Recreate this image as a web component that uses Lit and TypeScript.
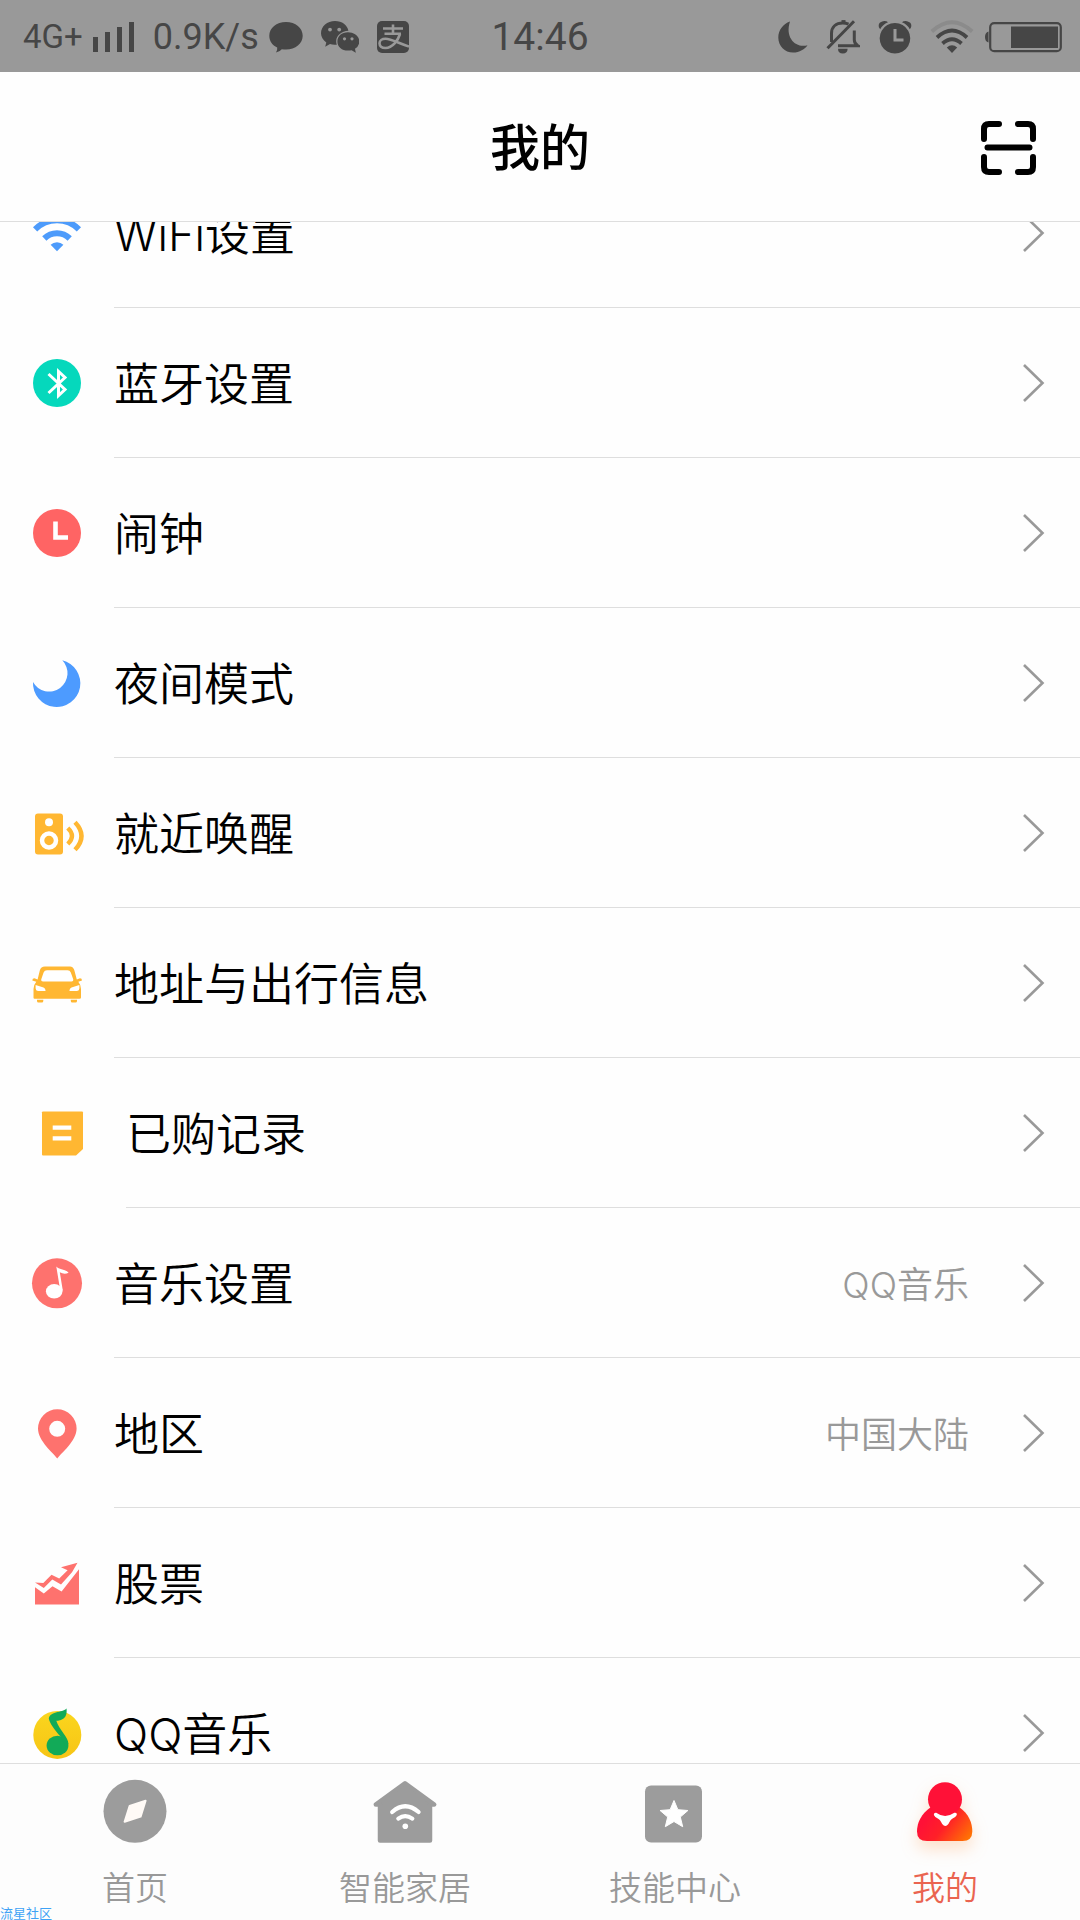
import { LitElement, html, svg, css, nothing, type SVGTemplateResult } from "lit";
import { customElement, property, state } from "lit/decorators.js";
import { classMap } from "lit/directives/class-map.js";

const icons: Record<string, SVGTemplateResult> = {
  wifi: svg`
    <g fill="none" stroke="#4d9bfb" stroke-width="6">
      <path d="M2.1 20.3A31 31 0 0 1 45.9 20.3"/>
      <path d="M11.3 29.5A18 18 0 0 1 36.7 29.5"/>
    </g>
    <path fill="#4d9bfb" d="M24 42.2L17.6 35.8A9 9 0 0 1 30.4 35.8Z"/>`,
  bluetooth: svg`
    <circle cx="24" cy="24" r="24" fill="#05d8bc"/>
    <path d="M15.5 15L32 30.500L25.500 36.500V12.500L32 18.500L15.500 34" fill="none" stroke="#fff" stroke-width="3"/>`,
  clock: svg`
    <circle cx="24" cy="24" r="24" fill="#ff6464"/>
    <path d="M22.500 12.500V28.500H35" fill="none" stroke="#fff" stroke-width="4.600"/>`,
  moon: svg`<path fill="#4d9bff" d="M29.3 1.300A23.700 23.700 0 1 1 0 23A18.400 18.400 0 1 0 29.300 1.300Z"/>`,
  speaker: svg`
    <rect x="2" y="4.500" width="28" height="41" rx="3" fill="#ffb732"/>
    <circle cx="16" cy="13.300" r="4" fill="#fff"/>
    <circle cx="16" cy="31.500" r="7" fill="#ffb732" stroke="#fff" stroke-width="4.500"/>
    <g fill="none" stroke="#ffb732" stroke-width="4.400">
      <path d="M34.800 19Q43.200 27 34.800 35"/>
      <path d="M42 13.200Q55 27 42 40.800"/>
    </g>`,
  car: svg`
    <path fill="#ffb732" d="M12 7.500H36C39.500 7.500 40.600 9 41.400 11.500L43.800 20.500L47 19.300Q49 19.300 49 21.500L45.300 22.800Q48 26 48 30V38.500Q48 39.700 46.500 39.700H1.500Q.5 39.700 .5 38.500V30Q.5 26 3.300 22.800L-.7 21.500Q-.7 19.300 1.500 19.300L4.600 20.500L6.800 11.500Q7.800 7.500 12 7.500ZM4 40.700H10.300V42Q10.300 43.500 8.800 43.500H5.500Q4 43.500 4 42ZM37.800 40.700H44V42Q44 43.500 42.500 43.500H39.300Q37.800 43.500 37.800 42Z"/>
    <path fill="#fff" d="M14 11.200H34.500Q37 11.200 37.800 13.400L40.300 20.500Q40.600 22.500 38.600 22.500H10Q7.800 22.500 8.200 20.500L10.600 13.400Q11.400 11.200 14 11.200ZM2.600 26L10.500 28.600Q12.600 29.600 12.600 32H5Q2.600 31.700 2.600 29.300ZM46.400 26L38.500 28.600Q36.400 29.600 36.400 32H44Q46.400 31.700 46.400 29.300Z"/>`,
  record: svg`
    <path fill="#ffb732" d="M3 3.300Q3 2.500 4 2.500H43Q44 2.500 44 3.500V40L37 46.500H4Q3 46.500 3 45.500Z"/>
    <path fill="#fff" d="M13.700 16.500H32.300V20.800H13.700ZM13.700 27.300H32.300V31.600H13.700Z"/>`,
  music: svg`
    <circle cx="24" cy="24.300" r="25" fill="#fe726e"/>
    <ellipse cx="21.200" cy="32.300" rx="8.300" ry="7.200" fill="#fff"/>
    <path fill="#fff" d="M23.300 7.500C26 11.300 31.800 9.200 35.600 13.800C32.600 15.200 29.800 15 26.800 13.300L29.800 31.500L27.400 32.500Z"/>`,
  pin: svg`
    <path fill="#fe726e" fill-rule="evenodd" d="M24.300 49.500C20.500 44.500 5 32 5 19.600A19.300 19.300 0 0 1 43.600 19.600C43.600 32 28.100 44.500 24.300 49.500ZM24.200 11.800A8 8 0 1 0 24.200 27.800A8 8 0 1 0 24.200 11.800Z"/>`,
  stock: svg`
    <path fill="#fe726e" d="M2 28.300L10.800 34.600L19.500 27.300L28.600 32.500L46 10.300V45.500H2Z"/>
    <path fill="#fe726e" d="M2 23.600L10.300 24L18.500 15.800L26.200 19.500L34.600 11.300L28 8.200L44.500 3.800L39 13.200L28 25.600L19.300 20.600L10.800 29Z"/>`,
  qq: svg`
    <defs>
      <linearGradient id="gold" x1="0" y1="0" x2="0" y2="1">
        <stop offset="0" stop-color="#fad61e"/><stop offset="1" stop-color="#f7c415"/>
      </linearGradient>
    </defs>
    <circle cx="24.300" cy="25.900" r="24" fill="url(#gold)"/>
    <ellipse cx="24.500" cy="36.500" rx="10.900" ry="9.800" fill="#12aa58"/>
    <path fill="#12aa58" d="M33.500 -.8C32 3.500 17 1.500 15.800 9.500C16.500 14 21.500 21 28 28L32.500 38L35.400 35C35.600 28 26 21 23.300 11.800C28 11.500 34.800 10 33.500 -.8Z"/>`,
};

const tabIcons: Record<string, SVGTemplateResult> = {
  home: svg`
    <circle cx="32" cy="32.300" r="31.500" fill="#9c9c9c"/>
    <path d="M42.600 21.800L37.600 37.600L21.600 42.800L26.600 27Z" fill="#fffaf6" stroke="#fffaf6" stroke-width="2" stroke-linejoin="round"/>`,
  house: svg`
    <path d="M32 4.200L61.200 25.500H57V61.500H7V25.500H2.800Z" fill="#9c9c9c" stroke="#9c9c9c" stroke-width="4.500" stroke-linejoin="round"/>
    <g fill="none" stroke="#fff" stroke-width="4.200" stroke-linecap="round">
      <path d="M19.200 33Q32.200 21.600 45.600 33"/>
      <path d="M25.300 39.600Q32.200 34.600 39.300 39.600"/>
    </g>
    <circle cx="32.300" cy="47.300" r="2.800" fill="#fff"/>`,
  star: svg`
    <rect x="2" y="6.500" width="57" height="57" rx="6" fill="#9c9c9c"/>
    <path d="M31 21.500L34.900 30.700L44.900 31.500L37.300 38L39.700 47.700L31 42.500L22.300 47.700L24.700 38L17.100 31.500L27.100 30.700Z" fill="#fff" stroke="#fff" stroke-width="1" stroke-linejoin="round"/>`,
  person: svg`
    <defs>
      <linearGradient id="flame" gradientUnits="userSpaceOnUse" x1="22" y1="28" x2="60" y2="58">
        <stop offset="0" stop-color="#ff1137"/><stop offset=".4" stop-color="#ff2028"/><stop offset="1" stop-color="#ff7a00"/>
      </linearGradient>
    </defs>
    <path d="M18 28C8 35 4 44 4 52.500Q4 62 14 62H49.500Q59.300 62 59.300 52.500C59.300 44 56 35 46 28Z" fill="url(#flame)"/>
    <circle cx="32" cy="20.200" r="17" fill="#ff1137"/>
    <path d="M23.200 33.800Q32 40.200 41.400 33.800Q44.600 33.400 43.600 36.300Q42.800 38.200 39.600 39.400Q37.600 40.200 35.400 45Q32.300 49.200 29.200 45Q27 40.200 24.800 39.400Q21.800 38.200 21 36.300Q20.400 33.600 23.200 33.800Z" fill="#fff"/>`,
};

interface Item { icon: string; label: string; value?: string; inset?: boolean; }

const items: Item[] = [
  { icon: "wifi", label: "WiFi设置" },
  { icon: "bluetooth", label: "蓝牙设置" },
  { icon: "clock", label: "闹钟" },
  { icon: "moon", label: "夜间模式" },
  { icon: "speaker", label: "就近唤醒" },
  { icon: "car", label: "地址与出行信息" },
  { icon: "record", label: "已购记录", inset: true },
  { icon: "music", label: "音乐设置", value: "QQ音乐" },
  { icon: "pin", label: "地区", value: "中国大陆" },
  { icon: "stock", label: "股票" },
  { icon: "qq", label: "QQ音乐" },
];

const tabs = [
  { icon: "home", label: "首页" },
  { icon: "house", label: "智能家居" },
  { icon: "star", label: "技能中心" },
  { icon: "person", label: "我的" },
];

@customElement("status-bar")
export class StatusBar extends LitElement {
  static styles = css`
    :host {
      display: grid;
      grid-template-columns: 1fr auto 1fr;
      align-items: center;
      box-sizing: border-box;
      height: 72px;
      padding: 1px 18px 0;
      background: #999;
      color: #464646;
      font-family: Roboto, "Liberation Sans", sans-serif;
      font-weight: 400;
    }
    .group { display: flex; align-items: center; gap: 18px; }
    .start { padding-left: 5px; }
    .end { justify-content: flex-end; }
    .tight { display: flex; align-items: center; gap: 10px; }
    .network { font-size: 33px; }
    .speed { font-size: 36px; }
    .time { font-size: 39px; }
    svg { display: block; fill: currentColor; }
  `;

  render() {
    return html`
      <div class="group start">
        <div class="tight">
          <span class="network">4G+</span>
          <svg width="42" height="32" viewBox="0 0 42 32">
            <path d="M0 16H5V31H0ZM12 11H17V31H12ZM24 6H29V31H24ZM36 1H41V31H36Z"/>
          </svg>
        </div>
        <div class="tight">
          <span class="speed">0.9K/s</span>
          <svg width="34" height="32" viewBox="0 0 34 32">
            <path d="M17 1C26.500 1 33.700 7 33.700 14.800S26.500 28.600 17 28.600Q14.800 28.600 12.800 28.200Q10.500 31 7 31.500Q8.600 29.500 8.200 26.600C3.300 24.200 .3 20 .3 14.800C.3 7 7.500 1 17 1Z"/>
          </svg>
        </div>
        <svg width="38" height="34" viewBox="0 0 38 34">
          <path d="M14 1C21 1 26.500 5.200 27.400 10.800C20.500 11 15.200 15.600 15.200 21.200Q15.200 23 15.800 24.700Q12 25.200 9 24.100L4.200 26.800L5.300 22.400C2 20 0 16.800 0 13.200C0 6.400 6.200 1 14 1Z"/>
          <path d="M27 12.300C33.300 12.300 38.300 16.300 38.300 21.400Q38.300 26 34 28.700L34.800 32.800L30.600 30.200Q28.900 30.600 27 30.600C20.800 30.600 16.400 26.600 16.400 21.400S20.800 12.300 27 12.300Z"/>
          <g fill="#999">
            <circle cx="9" cy="9.600" r="1.900"/><circle cx="18.200" cy="9.600" r="1.900"/>
            <circle cx="23.500" cy="18.800" r="1.600"/><circle cx="31" cy="18.800" r="1.600"/>
          </g>
        </svg>
        <svg width="32" height="32" viewBox="0 0 32 32">
          <rect width="32" height="32" rx="5"/>
          <g fill="none" stroke="#999" stroke-width="2.600">
            <path d="M6 7.500H26M16 3.500V12.500M7.500 12.800H24"/>
            <path d="M23 13C21 19.500 15.500 27 8.500 27C4.500 27 2.500 25 2.500 22.300C2.500 19.500 5 17.800 8.500 17.800C14.500 17.800 22 22.500 32 25.500"/>
          </g>
        </svg>
      </div>
      <span class="time">14:46</span>
      <div class="group end">
        <svg width="30" height="32" viewBox="0 0 30 32">
          <path d="M12 .5C5 3 .3 9 .3 16.500C.3 25 6.800 31.600 15 31.600C21.500 31.600 27 28 29.500 24.300C18 27.500 6.500 17 12 .5Z"/>
        </svg>
        <svg width="34" height="34" viewBox="0 0 34 34">
          <g fill="none" stroke="currentColor" stroke-width="3">
            <path d="M5.500 22V13.500C5.500 7 10 3 16.800 3Q20 3 22.500 4.200M28.300 10.500V20Q28.300 23.500 31.800 25.700H12"/>
            <path d="M1.500 28.200L28 1.200"/>
            <path d="M15.500 1.600H19.500"/>
          </g>
          <path d="M12 28.800H21.600Q21.600 33.500 16.800 33.500T12 28.800Z"/>
        </svg>
        <svg width="34" height="34" viewBox="0 0 34 34">
          <path d="M17 3A15.300 15.300 0 1 1 16.900 3Z"/>
          <path d="M1 7.500Q-.5 2.500 5 1.200Q8.500 .8 10 2.200Q4.500 4.500 2.200 9.200ZM33 7.500Q34.500 2.500 29 1.200Q25.500 .8 24 2.200Q29.500 4.500 31.800 9.200Z"/>
          <path d="M17 9V20H25.500" fill="none" stroke="#999" stroke-width="3"/>
        </svg>
        <div class="tight">
          <svg width="44" height="34" viewBox="0 0 44 34">
            <g fill="none" stroke="currentColor" stroke-width="3.800">
              <path d="M1.800 11.500Q22 -7 42.200 11.500" stroke="#8b8b8b"/>
              <path d="M7 17.500Q22 3.500 37 17.500"/>
              <path d="M12.500 23.500Q22 14.800 31.500 23.500"/>
            </g>
            <path d="M22 33L16.800 27.500Q22 23 27.200 27.500Z"/>
          </svg>
          <svg width="78" height="32" viewBox="0 0 78 32">
            <rect x="6.200" y="2.200" width="70.600" height="28" rx="4" fill="none" stroke="currentColor" stroke-width="2.200"/>
            <path d="M4.500 10.500V21.500Q1 20.500 1 16T4.500 10.500ZM27 5.500H74V27H27Z"/>
          </svg>
        </div>
      </div>`;
  }
}

@customElement("settings-row")
export class SettingsRow extends LitElement {
  @property() icon = "";
  @property() label = "";
  @property() value?: string;
  @property({ type: Boolean }) inset = false;

  static styles = css`
    :host { display: block; }
    .row {
      display: flex;
      align-items: stretch;
      height: 150px;
      color: #000;
      text-decoration: none;
    }
    .slot {
      display: flex;
      align-items: center;
      justify-content: center;
      flex: none;
      width: 114px;
    }
    .slot.inset { width: 126px; }
    .body {
      display: flex;
      align-items: center;
      flex: 1;
      min-width: 0;
      padding-right: 36px;
      border-bottom: 1px solid #dedede;
    }
    .label, .value { padding-top: 4px; }
    .label { flex: 1; font-size: 45px; line-height: 60px; }
    .value { font-size: 36px; line-height: 48px; color: #999; margin-right: 54px; }
    svg { display: block; overflow: visible; }
  `;

  render() {
    return html`
      <a class="row" href="#${this.icon}">
        <span class=${classMap({ slot: true, inset: this.inset })}>
          <svg width="48" height="48" viewBox="0 0 48 48" aria-hidden="true">${icons[this.icon]}</svg>
        </span>
        <span class="body">
          <span class="label">${this.label}</span>
          ${this.value ? html`<span class="value">${this.value}</span>` : nothing}
          <svg width="21" height="38" viewBox="0 0 21 38" aria-hidden="true">
            <path d="M1 1L19.500 19L1 37" fill="none" stroke="#999" stroke-width="2.600"/>
          </svg>
        </span>
      </a>`;
  }
}

@customElement("app-root")
export class AppRoot extends LitElement {
  @state() private active = "person";

  static styles = css`
    :host {
      display: flex;
      flex-direction: column;
      position: relative;
      height: 100vh;
      overflow: hidden;
      background: #fefefe;
      font-family: Inter, "Noto Sans CJK SC", sans-serif;
      font-weight: 350;
    }
    status-bar { flex: none; }
    .header {
      display: grid;
      grid-template-columns: 1fr auto 1fr;
      align-items: center;
      flex: none;
      box-sizing: border-box;
      height: 150px;
      padding: 2px 44px 0;
      border-bottom: 1px solid #dedede;
    }
    .title {
      grid-column: 2;
      margin: 0;
      font-size: 50px;
      line-height: 64px;
      font-weight: 500;
      color: #000;
    }
    .scan {
      justify-self: end;
      padding: 0;
      border: 0;
      background: none;
      color: #000;
    }
    .scan svg, .tab svg { display: block; overflow: visible; }
    .viewport { flex: 1; min-height: 0; overflow: hidden; }
    .list { margin: -64px 0 0; padding: 0; list-style: none; }
    .tabs {
      display: grid;
      grid-template-columns: repeat(4, 1fr);
      flex: none;
      border-top: 1px solid #dedede;
      background: #fdfdfd;
    }
    .tab {
      display: flex;
      flex-direction: column;
      align-items: center;
      gap: 25px;
      padding: 15px 0 12px;
      border: 0;
      background: none;
      font-family: inherit;
      font-weight: inherit;
      font-size: 33px;
      line-height: 40px;
      color: #999;
    }
    .tab.active { color: #ea6450; }
    .tab.active svg { filter: drop-shadow(0 8px 8px rgba(255, 140, 50, 0.25)); }
    .mark {
      position: absolute;
      left: 0;
      bottom: 0;
      font-size: 13px;
      line-height: 13px;
      font-weight: 400;
      color: #3fa2f5;
    }
  `;

  render() {
    return html`
      <status-bar></status-bar>
      <header class="header">
        <h1 class="title">我的</h1>
        <button class="scan" aria-label="扫一扫">
          <svg width="55" height="54" viewBox="0 0 55 54" fill="none" stroke="currentColor" stroke-width="6" stroke-linecap="round" stroke-linejoin="round">
            <path d="M3 18V8Q3 3 8 3H18M37 3H47Q52 3 52 8V18M52 36V46Q52 51 47 51H37M18 51H8Q3 51 3 46V36M6.500 26.500H48.500"/>
          </svg>
        </button>
      </header>
      <main class="viewport">
        <ul class="list">
          ${items.map((item) => html`
            <li>
              <settings-row .icon=${item.icon} .label=${item.label} .value=${item.value} ?inset=${item.inset ?? false}></settings-row>
            </li>`)}
        </ul>
      </main>
      <nav class="tabs">
        ${tabs.map((tab) => html`
          <button class=${classMap({ tab: true, active: tab.icon === this.active })} @click=${() => { this.active = tab.icon; }}>
            <svg width="64" height="64" viewBox="0 0 64 64" aria-hidden="true">${tabIcons[tab.icon]}</svg>
            <span>${tab.label}</span>
          </button>`)}
      </nav>
      <span class="mark">流星社区</span>`;
  }
}
